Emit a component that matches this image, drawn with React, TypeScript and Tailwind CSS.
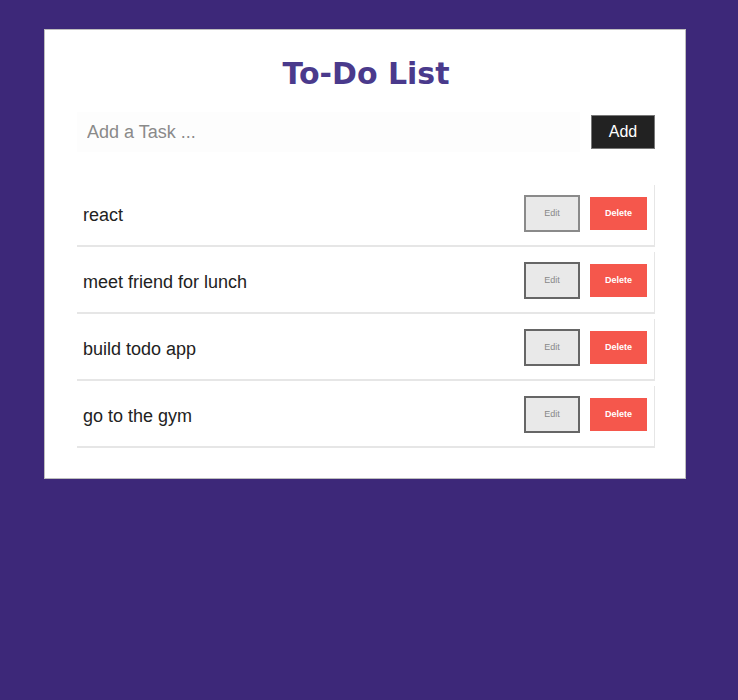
import React, { useState } from 'react';

const initialTasks = ['react', 'meet friend for lunch', 'build todo app', 'go to the gym'];

const App: React.FC = () => {
  const [tasks] = useState(initialTasks);
  const [value, setValue] = useState('');

  return (
    <div className="min-h-[700px] w-full bg-[#3d2879] pt-[29px] font-['Liberation_Sans',Arial,sans-serif]">
      <div className="ml-[44px] w-[642px] border border-[#bdbdbd] bg-white pb-[30px] pl-[32px] pr-[30px] pt-[24px]">
        <h1 className="text-center font-['DejaVu_Sans',Verdana,sans-serif] text-[30px] font-bold leading-[40px] text-[#4a3a8c]">
          To-Do List
        </h1>

        {/* Input row */}
        <div className="mt-[18px] flex items-center">
          <input
            value={value}
            onChange={e => setValue(e.target.value)}
            placeholder="Add a Task ..."
            className="h-[40px] min-w-0 flex-1 bg-[#fdfdfd] px-[10px] text-[18px] text-gray-800 outline-none placeholder:text-[#8a8a8a]"
          />
          <button className="ml-[11px] h-[34px] w-[64px] border border-[#777] bg-[#222] text-[16px] text-white">
            Add
          </button>
        </div>

        {/* Task list */}
        <div className="mt-[33px] flex flex-col gap-[5px]">
          {tasks.map((task, i) => (
            <div
              key={task}
              className="flex h-[62px] items-center border-b-2 border-r border-[#e6e6e6] pb-[3px] pl-[6px] pr-[7px]"
            >
              <span className="flex-1 pt-[3px] text-[18px] text-[#222]">{task}</span>
              <button
                className={`h-[37px] w-[56px] border-2 bg-[#e9e9e9] text-[9px] text-[#888] ${
                  i === 0 ? 'border-[#8a8a8a]' : 'border-[#666]'
                }`}
              >
                Edit
              </button>
              <button className="ml-[10px] h-[33px] w-[57px] bg-[#f5574c] text-[9px] font-bold text-white">
                Delete
              </button>
            </div>
          ))}
        </div>
      </div>
    </div>
  );
};

export default App;
